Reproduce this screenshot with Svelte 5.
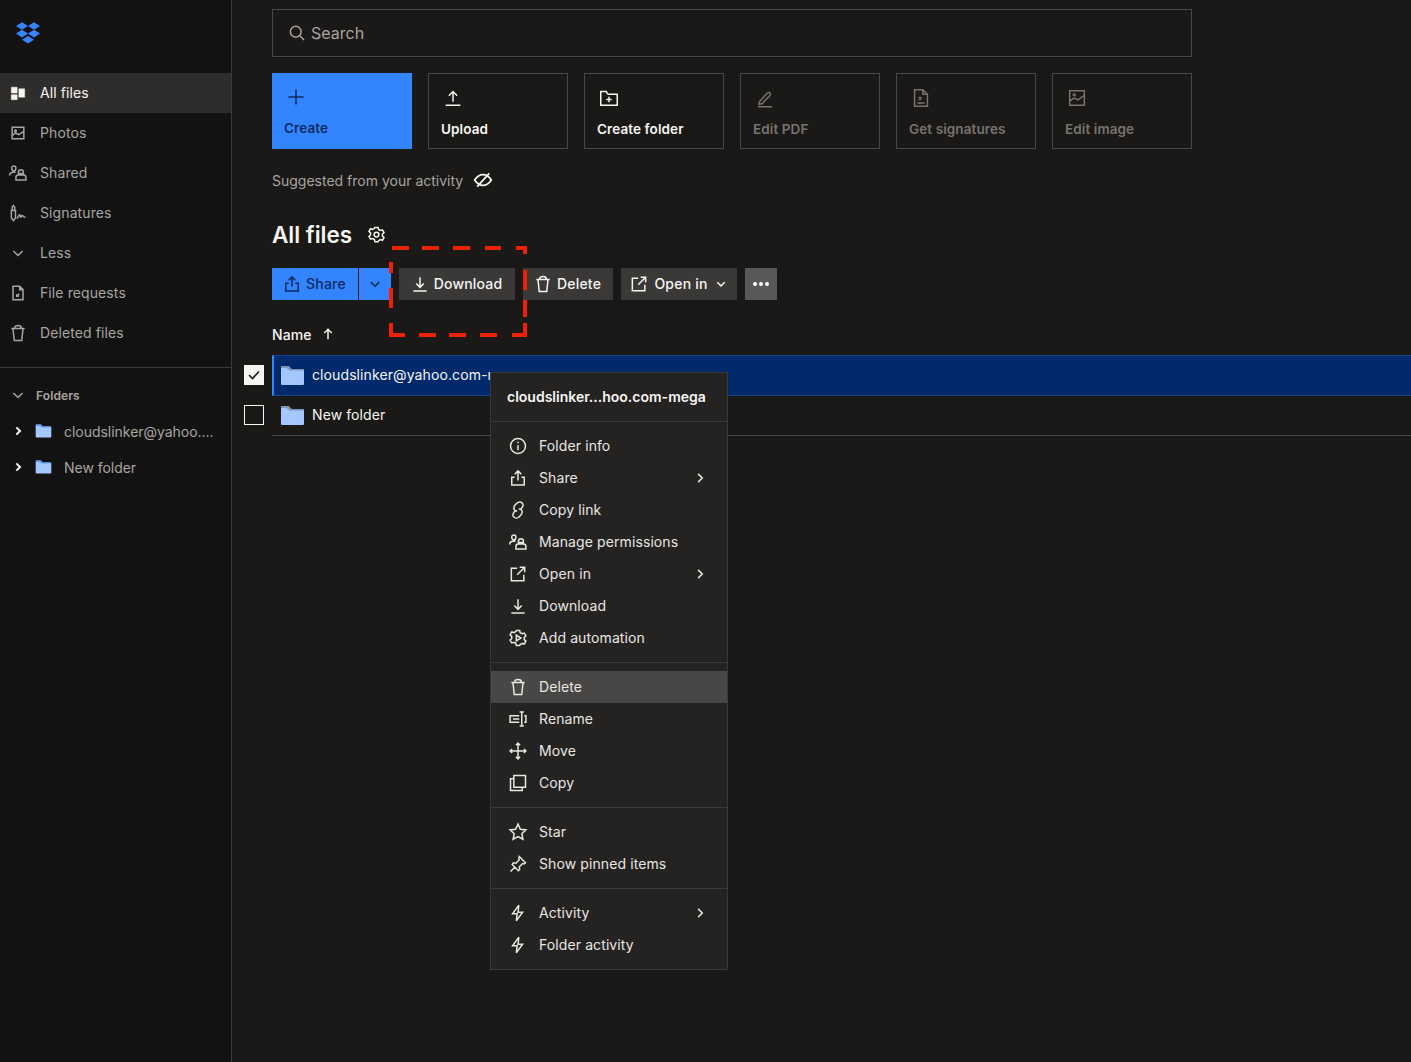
<script>
  const icons = {
    allfiles: 'M4 5h7v7H4zM4 14h7v6H4zM13 7h7v10h-7z',
    photos: 'M5 5h14v14H5zM5 15l4-3 4 2 6-4M9 8.500a1 1 0 1 0 .01 0',
    shared: 'M7 3.500a2.500 2.500 0 0 1 2.500 2.500c0 1.800-1 3.500-2.500 3.500S4.500 7.800 4.500 6A2.500 2.500 0 0 1 7 3.500zM2 15c0-2.500 1.500-4 4-4h3M15.500 8a3 3 0 0 1 3 3v1.500h-6V11a3 3 0 0 1 3-3zM9.500 20.500v-3a3 3 0 0 1 3-3h6a3 3 0 0 1 3 3v3z',
    signatures: 'M4 9h5v9l-2.500 3L4 18zM5 9V5l1.500-2L8 5v4M11 19c1-3 2-5 3-5s0 3 1 3 1-2 2-2 1 2 4 2',
    chevdown: 'M6.500 9.500 12 15l5.500-5.500',
    chevright: 'M9.500 6.500 15 12l-5.500 5.500',
    filereq: 'M6 4h8l4 4v12H6zM14 4v4h4M13.500 13l-3 3M10.500 13.500V16H13',
    trash: 'M4 6.500h16M8 6c0-2 1.500-3 4-3s4 1 4 3M6 7l1.500 14h9L18 7',
    search: 'M10.500 4a6.500 6.500 0 1 0 0 13 6.500 6.500 0 0 0 0-13zM15.300 15.300 20.500 20.500',
    plus: 'M12 3v18M3 12h18',
    upload: 'M12 16V5M7.500 9.500 12 5l4.500 4.500M4 20h16',
    newfolder: 'M3 5h6l2 3h10v12H3zM12 10.500v6M9 13.500h6',
    pencil: 'M6 16l8.500-9.500a2 2 0 0 1 3 2.600L9 18l-3.500 1zM4.500 21.500h15',
    getsig: 'M5 3h9l5 5v13H5zM14 3v5h5M9.500 11l3 3M12.500 11l-3 3M8 17.500h8',
    editimg: 'M4 4h16v16H4zM4 15l5-3 4 2 7-5M9 7.500a1 1 0 1 0 .01 0',
    eyeoff: 'M2 12c3-4.500 6-6.500 10-6.500s7 2 10 6.500c-3 4.500-6 6.500-10 6.500S5 16.500 2 12zM19.500 4 5 20',
    gear: 'M10 3h4l.6 2.600 2.300 1.300 2.600-.8 2 3.400-2 1.900v2.600l2 1.900-2 3.400-2.600-.8-2.300 1.300L14 21h-4l-.6-2.600-2.300-1.300-2.600.8-2-3.400 2-1.900v-2.600l-2-1.900 2-3.400 2.600.8 2.300-1.300zM12 9a3 3 0 1 0 0 6 3 3 0 0 0 0-6z',
    share: 'M12 15V3.500M8 7.500l4-4 4 4M8 11H4.500v9.500h15V11H16',
    download: 'M12 4v12M7.500 11.500 12 16l4.500-4.500M4 20.500h16',
    openin: 'M11 5H4v15h15v-7M14 4h6v6M20 4l-9 9',
    arrowup: 'M12 20V5M6.500 10.500 12 5l5.500 5.500',
    info: 'M12 3a9 9 0 1 0 0 18 9 9 0 0 0 0-18zM12 11v6M12 7v1.800',
    link: 'M11 13c-2.500.5-4-1-4-3.500 0-1.500.5-2.500 1.500-3.500l2-2c2-2 5-2 6.500-.5s1.500 4-.5 6L15 11M13 11c2.500-.5 4 1 4 3.500 0 1.500-.5 2.500-1.500 3.500l-2 2c-2 2-5 2-6.500.5s-1.500-4 .5-6L9 13',
    automation: 'M10 3h4l.6 2.600 2.300 1.300 2.600-.8 2 3.400-2 1.900v2.600l2 1.900-2 3.400-2.600-.8-2.300 1.300L14 21h-4l-.6-2.600-2.300-1.300-2.600.8-2-3.400 2-1.900v-2.600l-2-1.900 2-3.400 2.600.8 2.300-1.300zM10 8.500v7l5.500-3.500z',
    rename: 'M14 3.500h5M14 20.500h5M16.500 3.500v17M13.500 8H2.500v8h11M19.500 8h2v8h-2M6 12h7.500',
    move: 'M12 2.500v19M2.500 12h19M9.500 5 12 2.500 14.500 5M9.500 19l2.500 2.500 2.500-2.500M5 9.500 2.500 12 5 14.500M19 9.500l2.500 2.500-2.500 2.500',
    copy: 'M7 3h14v14H7zM7 7H3v14h14v-4',
    star: 'M12 2.500l2.900 6.200 6.600.8-4.900 4.600 1.300 6.600L12 17.400l-5.900 3.300 1.300-6.600-4.900-4.600 6.600-.8z',
    pin: 'M13.500 3 21 10.500 19.500 12l-2-.5-4 4 .5 3-1.500 1.500-7.500-7.500L6.500 10.500l3 .5 4-4-.5-2zM8.500 15.500 3 21',
    bolt: 'M13 2.500 5.500 13h5.500l-1 8.500L17.500 11H12z',
  };
  const nav = [
    ['allfiles', 'All files', true],
    ['photos', 'Photos'],
    ['shared', 'Shared'],
    ['signatures', 'Signatures'],
    ['chevdown', 'Less'],
    ['filereq', 'File requests'],
    ['trash', 'Deleted files'],
  ];
  const tiles = [
    ['upload', 'Upload', false],
    ['newfolder', 'Create folder', false],
    ['pencil', 'Edit PDF', true],
    ['getsig', 'Get signatures', true],
    ['editimg', 'Edit image', true],
  ];
  const menu = [
    [
      ['info', 'Folder info'],
      ['share', 'Share', true],
      ['link', 'Copy link'],
      ['shared', 'Manage permissions'],
      ['openin', 'Open in', true],
      ['download', 'Download'],
      ['automation', 'Add automation'],
    ],
    [['trash', 'Delete'], ['rename', 'Rename'], ['move', 'Move'], ['copy', 'Copy']],
    [['star', 'Star'], ['pin', 'Show pinned items']],
    [['bolt', 'Activity', true], ['bolt', 'Folder activity']],
  ];
</script>

{#snippet icon(name, size = 20)}
  <svg class="icon" width={size} height={size} viewBox="0 0 24 24" aria-hidden="true">
    <path d={icons[name]} />
  </svg>
{/snippet}

{#snippet folder(w, h, tab = '#7f95b8')}
  <svg width={w} height={h} viewBox="0 0 25 21" aria-hidden="true">
    <path d="M1 2.500C1 1.500 1.500 1 2.500 1h6l3 3h11c1 0 1.500.5 1.500 1.500v13c0 1-.5 1.500-1.500 1.500h-20C1.500 20 1 19.500 1 18.500z" fill="#a4c8fd" />
    <path d="M8.500 1l3 3h11c1 0 1.500.5 1.500 1.500H9.500L6.500 3H1v-.5C1 1.500 1.500 1 2.500 1z" fill={tab} />
  </svg>
{/snippet}

<div class="app">
  <aside class="sidebar">
    <div class="logo">
      <svg width="24" height="22" viewBox="0 0 24 22" aria-label="Dropbox">
        <path d="M0 4 6 .2 12 4 6 7.800zM12 4 18 .2 24 4 18 7.800zM0 11.600 6 7.800l6 3.800-6 3.800zM12 11.600 18 7.800l6 3.800-6 3.800zM6 17.800 12 14l6 3.800L12 21.600z" fill="#3984ff" />
      </svg>
    </div>
    <nav class="nav">
      {#each nav as [ic, label, active]}
        <div class="nav-item" class:active>
          {@render icon(ic)}
          <span>{label}</span>
        </div>
      {/each}
    </nav>
    <div class="folders">
      <div class="folders-head">
        {@render icon('chevdown')}
        <span>Folders</span>
      </div>
      {#each ['cloudslinker@yahoo....', 'New folder'] as name}
        <div class="tree-row">
          {@render icon('chevright', 16)}
          {@render folder(17, 16, '#5f9bff')}
          <span>{name}</span>
        </div>
      {/each}
    </div>
  </aside>

  <main class="main">
    <div class="search">
      {@render icon('search')}
      <span>Search</span>
    </div>

    <div class="tiles">
      <div class="tile create">
        {@render icon('plus', 20)}
        <span>Create</span>
      </div>
      {#each tiles as [ic, label, dim]}
        <div class="tile" class:dim>
          {@render icon(ic, 22)}
          <span>{label}</span>
        </div>
      {/each}
    </div>

    <div class="suggested">
      <span>Suggested from your activity</span>
      {@render icon('eyeoff', 20)}
    </div>

    <div class="title">
      <h1>All files</h1>
      {@render icon('gear', 19)}
    </div>

    <div class="toolbar">
      <button class="primary share">{@render icon('share')}<span>Share</span></button>
      <button class="primary caret">{@render icon('chevdown', 18)}</button>
      <button class="download">{@render icon('download')}<span>Download</span></button>
      <button class="delete">{@render icon('trash')}<span>Delete</span></button>
      <button class="open">{@render icon('openin')}<span>Open in</span>{@render icon('chevdown', 16)}</button>
      <button class="more" aria-label="More">
        <svg width="16" height="4" viewBox="0 0 16 4"><path d="M2 0a2 2 0 1 0 0 4 2 2 0 0 0 0-4zM8 0a2 2 0 1 0 0 4 2 2 0 0 0 0-4zM14 0a2 2 0 1 0 0 4 2 2 0 0 0 0-4z" fill="#fff" /></svg>
      </button>
    </div>

    <div class="sort">
      <span>Name</span>
      {@render icon('arrowup', 16)}
    </div>

    <div class="list">
      <div class="row selected">
        <div class="check on">
          <svg width="12" height="10" viewBox="0 0 12 10"><path d="M1 5l3.500 3.500L11 1.500" fill="none" stroke="#1a1918" stroke-width="1.600" /></svg>
        </div>
        <div class="cell">
          {@render folder(25, 21)}
          <span>cloudslinker@yahoo.com-mega</span>
        </div>
      </div>
      <div class="row">
        <div class="check"></div>
        <div class="cell">
          {@render folder(25, 21)}
          <span>New folder</span>
        </div>
      </div>
    </div>
  </main>

  <svg class="annotation" width="145" height="98" viewBox="387 244 145 98" aria-hidden="true">
    <path d="M392 248h17M422 248h17M453 248h17M485 248h16M516 248H525V254M525 270V290M525 300V317M525 323V335H512M497 335H480M466 335H449M436 335H419M405 335H391V323M391 308V288M391 273V262" fill="none" stroke="#ee2200" stroke-width="4" />
  </svg>

  <div class="menu">
    <div class="menu-head">cloudslinker...hoo.com-mega</div>
    {#each menu as group}
      <div class="menu-group">
        {#each group as [ic, label, sub]}
          <div class="menu-item" class:hover={label === 'Delete'}>
            {@render icon(ic, 20)}
            <span>{label}</span>
            {#if sub}{@render icon('chevright', 18)}{/if}
          </div>
        {/each}
      </div>
    {/each}
  </div>
</div>

<style>
  :global(body) {
    margin: 0;
    background: #1a1918;
  }
  .app {
    position: relative;
    display: flex;
    height: 1062px;
    overflow: hidden;
    background: #1a1918;
    color: #f7f5f2;
    font-family: Inter, "Liberation Sans", sans-serif;
    font-size: 14px;
    letter-spacing: 0.1px;
  }
  .icon {
    flex: none;
    fill: none;
    stroke: currentColor;
    stroke-width: 1.500px;
  }
  .icon path {
    vector-effect: non-scaling-stroke;
  }

  .sidebar {
    flex: none;
    width: 231px;
    background: #121212;
    border-right: 1px solid #3a3937;
    color: #a8a5a0;
  }
  .logo {
    height: 73px;
    padding: 22px 0 0 16px;
    box-sizing: border-box;
  }
  .nav-item {
    display: flex;
    align-items: center;
    gap: 12px;
    height: 40px;
    padding-left: 8px;
  }
  .nav-item span {
    padding-bottom: 2px;
  }
  .nav-item.active {
    background: #2e2d2b;
    color: #f7f5f2;
  }
  .nav-item.active .icon {
    fill: currentColor;
    stroke-width: 0.5px;
  }
  .folders {
    margin-top: 14px;
    border-top: 1px solid #3a3937;
    padding-top: 13px;
  }
  .folders-head {
    display: flex;
    align-items: center;
    gap: 8px;
    height: 28px;
    padding-left: 8px;
    font-size: 12px;
    font-weight: 600;
  }
  .tree-row {
    display: flex;
    align-items: center;
    height: 36px;
    padding-left: 10px;
    letter-spacing: -0.03px;
  }
  .folders-head + .tree-row {
    margin-top: 4px;
  }
  .tree-row .icon {
    color: #f7f5f2;
    stroke-width: 2px;
    margin-right: 9px;
  }
  .tree-row span {
    margin-left: 12px;
    white-space: nowrap;
  }

  .main {
    flex: 1;
    min-width: 0;
    padding: 9px 0 0 12px;
  }
  .search {
    display: flex;
    align-items: center;
    gap: 4px;
    width: 918px;
    height: 46px;
    margin-left: 28px;
    border: 1px solid #4a4846;
    color: #a8a5a0;
    font-size: 16px;
    letter-spacing: 0;
  }
  .search .icon {
    margin-left: 14px;
  }
  .tiles {
    display: flex;
    gap: 16px;
    margin: 16px 0 0 28px;
  }
  .tile {
    display: flex;
    flex-direction: column;
    justify-content: space-between;
    box-sizing: border-box;
    width: 140px;
    height: 76px;
    padding: 13px 12px 11px;
    border: 1px solid #4a4846;
    font-size: 13.500px;
    font-weight: 600;
  }
  .tile .icon {
    margin-left: 1px;
  }
  .tile.create {
    padding: 13px 11px 12px;
    background: #3384ff;
    border-color: #3384ff;
    color: #0f2a5c;
  }
  .tile.create .icon {
    margin-left: 2px;
  }
  .tile.dim {
    color: #77746f;
  }
  .suggested {
    display: flex;
    align-items: center;
    gap: 10px;
    height: 20px;
    margin: 21px 0 0 28px;
    color: #a8a5a0;
    letter-spacing: 0;
  }
  .suggested .icon {
    color: #f7f5f2;
    stroke-width: 1.800px;
  }
  .title {
    display: flex;
    align-items: center;
    gap: 15px;
    margin: 28px 0 0 28px;
    height: 32px;
  }
  h1 {
    margin: 0;
    font-size: 22.500px;
    font-weight: 600;
    letter-spacing: 0;
  }
  .toolbar {
    display: flex;
    margin: 18px 0 0 28px;
  }
  button {
    display: flex;
    align-items: center;
    justify-content: center;
    gap: 4px;
    height: 32px;
    padding: 0;
    border: 0;
    background: #3a3937;
    color: #f7f5f2;
    font: inherit;
    font-weight: 500;
    letter-spacing: 0.2px;
  }
  button span {
    padding-bottom: 2px;
  }
  button.primary {
    background: #3384ff;
    color: #0f2a5c;
  }
  .share {
    width: 86px;
    margin-right: 1px;
    padding-right: 2px;
  }
  .caret {
    width: 32px;
    margin-right: 8px;
  }
  .download {
    width: 116px;
    margin-right: 8px;
    padding-right: 2px;
  }
  .delete {
    width: 90px;
    margin-right: 8px;
    padding-right: 2px;
  }
  .open {
    width: 116px;
    margin-right: 8px;
    gap: 5px;
  }
  .more {
    width: 32px;
    background: #595957;
  }
  .sort {
    display: flex;
    align-items: center;
    gap: 8px;
    height: 20px;
    margin: 24px 0 11px 28px;
    font-weight: 500;
  }
  .row {
    display: flex;
    align-items: center;
    gap: 8px;
  }
  .row.selected {
    margin-bottom: -1px;
  }
  .check {
    flex: none;
    display: flex;
    align-items: center;
    justify-content: center;
    box-sizing: border-box;
    width: 20px;
    height: 20px;
    margin-bottom: 1px;
    border: 1px solid #f7f5f2;
  }
  .check.on {
    background: #f7f5f2;
  }
  .cell {
    flex: 1;
    display: flex;
    align-items: center;
    gap: 7px;
    height: 40px;
    padding-left: 8px;
    border-bottom: 1px solid #4a4846;
  }
  .cell span {
    padding-bottom: 1px;
  }
  .row.selected .cell {
    height: 39px;
    padding-left: 6px;
    background: #002a6b;
    border: 1px solid #17438c;
    border-width: 1px 0;
    border-left: 2px solid #3384ff;
  }
  .row.selected .cell span {
    padding-bottom: 2px;
  }

  .annotation {
    position: absolute;
    left: 387px;
    top: 244px;
  }
  .menu {
    position: absolute;
    left: 490px;
    top: 372px;
    width: 236px;
    background: #242322;
    border: 1px solid #3a3937;
    color: #e8e6e2;
  }
  .menu-head {
    height: 48px;
    padding-left: 16px;
    line-height: 48px;
    font-weight: 600;
    letter-spacing: 0;
    color: #f7f5f2;
  }
  .menu-group {
    padding: 8px 0;
    border-top: 1px solid #3a3937;
  }
  .menu-item {
    display: flex;
    align-items: center;
    gap: 11px;
    height: 32px;
    padding: 0 18px 0 17px;
  }
  .menu-item span {
    flex: 1;
    padding-bottom: 2px;
  }
  .menu-item.hover {
    background: #484745;
  }
</style>
